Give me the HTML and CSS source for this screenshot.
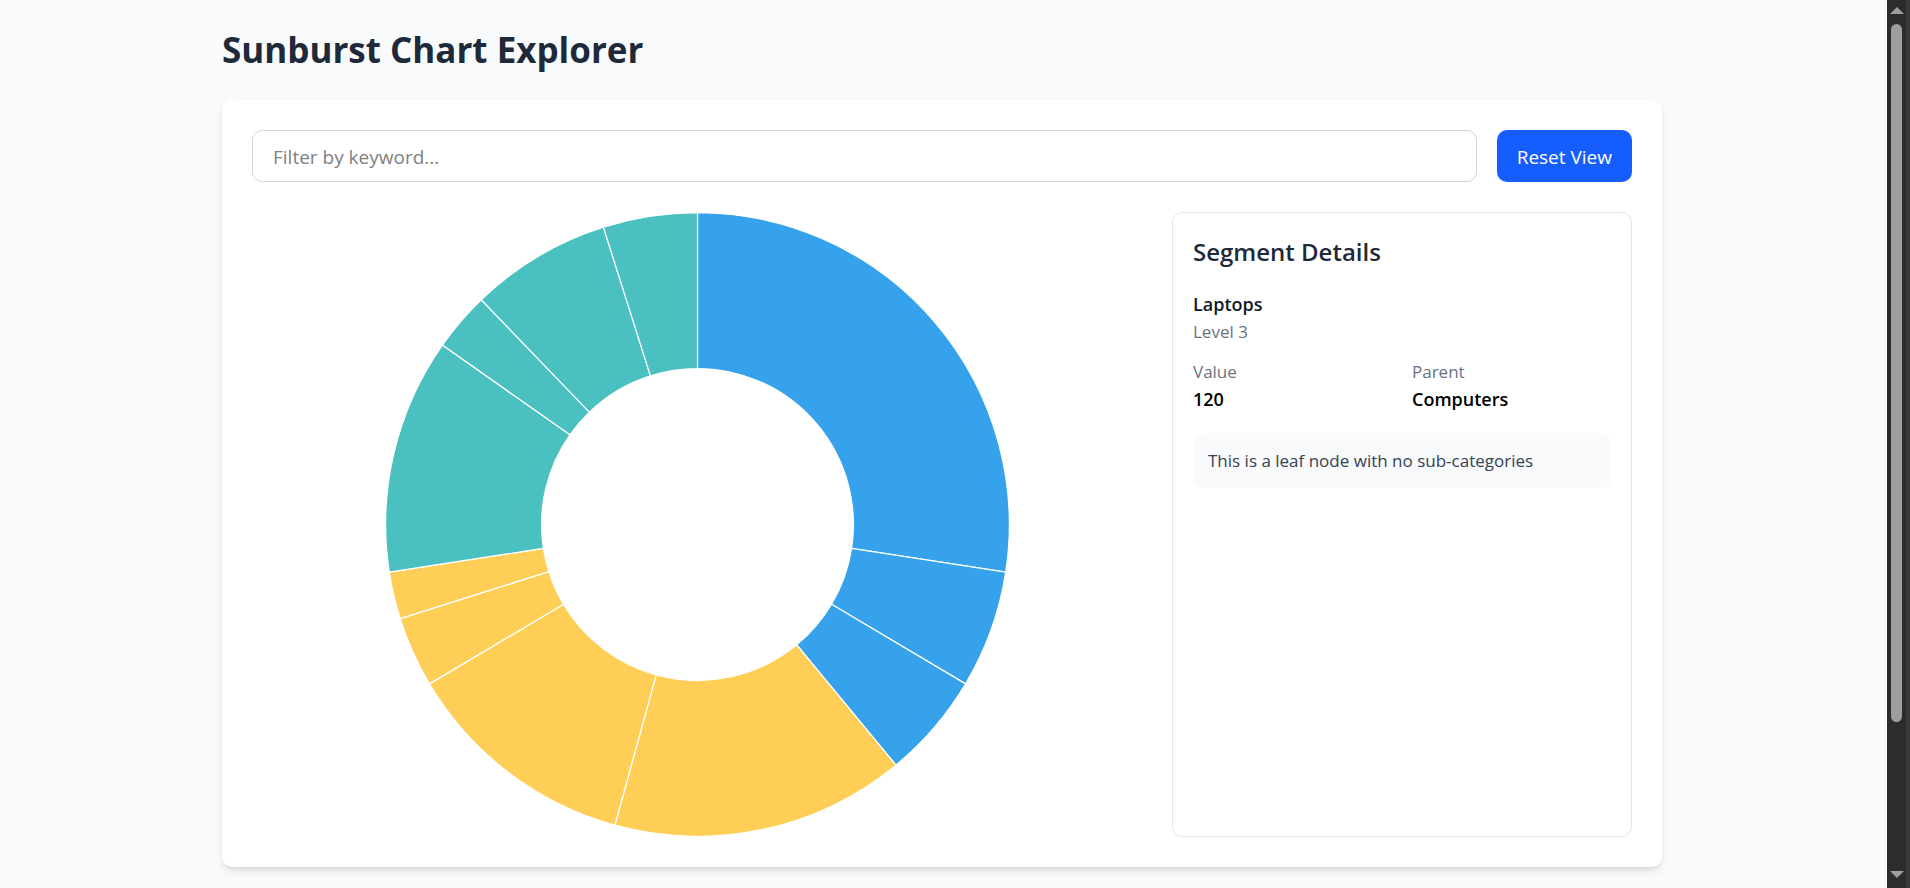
FILE: index.html
```
<!DOCTYPE html>
<html lang="en">
<head>
<meta charset="utf-8">
<title>Sunburst Chart Explorer</title>
<link rel="stylesheet" href="styles.css">
</head>
<body>
<div class="page">
  <main class="container">
    <h1 class="title">Sunburst Chart Explorer</h1>
    <section class="card">
      <form class="toolbar">
        <input class="filter" type="text" placeholder="Filter by keyword..." aria-label="Filter by keyword">
        <button class="reset" type="button">Reset View</button>
      </form>
      <div class="content">
        <div class="chart">
          <svg class="chart-svg" id="chart" viewBox="-250 -250 500 500" role="img" aria-label="Sunburst chart"></svg>
        </div>
        <aside class="details">
          <h2 class="details-title">Segment Details</h2>
          <h3 class="segment-name">Laptops</h3>
          <p class="muted">Level 3</p>
          <dl class="facts">
            <div><dt class="muted">Value</dt><dd class="fact">120</dd></div>
            <div><dt class="muted">Parent</dt><dd class="fact">Computers</dd></div>
          </dl>
          <p class="note">This is a leaf node with no sub-categories</p>
        </aside>
      </div>
    </section>
  </main>
</div>
<div class="rail" aria-hidden="true">
  <svg class="arrow" viewBox="0 0 14 8"><path d="M7 0 14 7H0Z"/></svg>
  <div class="track"><div class="thumb"></div></div>
  <svg class="arrow" viewBox="0 0 14 8"><path d="M0 0H14L7 7Z"/></svg>
</div>
<script src="chart.js"></script>
</body>
</html>
```
FILE: styles.css
```
* { box-sizing: border-box; margin: 0; padding: 0; }

body {
  display: grid;
  grid-template-columns: 1fr 23px;
  height: 100vh;
  overflow: hidden;
  background: #f9fafb;
  color: #000;
  font: 18px/30px "Segoe UI", "Open Sans", "Noto Sans", sans-serif;
}

.page { min-width: 0; overflow: hidden; padding: 27px 23px 0 20px; }
.container { max-width: 1440px; margin: 0 auto; }

.title {
  margin-bottom: 28px;
  color: #1e2939;
  font-size: 35px;
  font-weight: 700;
  line-height: 45px;
}

.card {
  padding: 30px;
  border-radius: 10px;
  background: #fff;
  box-shadow: 0 5px 8px -1px rgba(0, 0, 0, .1), 0 3px 5px -3px rgba(0, 0, 0, .1);
}

.toolbar { display: flex; gap: 20px; margin-bottom: 30px; }

.filter {
  flex: 1;
  min-width: 0;
  height: 52px;
  padding: 2px 20px 0;
  border: 1px solid #d1d5dc;
  border-radius: 10px;
  background: #fff;
  font: inherit;
  font-size: 19px;
}
.filter::placeholder { color: #808080; }

.reset {
  padding: 2px 20px 0;
  border: 0;
  border-radius: 10px;
  background: #155dfc;
  color: #fff;
  font: inherit;
  font-size: 19px;
  white-space: nowrap;
}

.content { display: flex; gap: 30px; }
.chart { flex: 1; min-width: 0; display: flex; justify-content: center; }
.chart-svg { display: block; width: 100%; max-width: 625px; aspect-ratio: 1; }
.segment { stroke: #fff; stroke-width: 1; stroke-linejoin: round; }
.electronics { fill: #36a2eb; }
.clothing { fill: #ffce56; }
.home { fill: #4bc0c0; }

.details {
  width: calc(100% / 3);
  padding: 21px 20px 20px;
  border: 1px solid #e5e7eb;
  border-radius: 10px;
}

.details-title {
  margin-bottom: 20px;
  color: #1e2939;
  font-size: 24px;
  font-weight: 600;
  line-height: 35px;
}
.segment-name { color: #101828; font-size: 18px; font-weight: 600; line-height: 30px; }
.muted { color: #6a7282; font-size: 17px; line-height: 25px; }

.facts {
  display: grid;
  grid-template-columns: 1fr 1fr;
  gap: 20px;
  margin: 15px 0 19px;
}
.fact { font-weight: 600; }

.note {
  padding: 15px;
  border-radius: 10px;
  background: #f9fafb;
  color: #364153;
  font-size: 17px;
  line-height: 25px;
}

.rail {
  display: flex;
  flex-direction: column;
  align-items: center;
  justify-content: space-between;
  padding: 7px 0 9px;
  border-right: 4px solid #383838;
  background: #2c2c2c;
}
.arrow { width: 14px; height: 8px; fill: #9e9e9e; }
.track { flex: 1; width: 11px; padding: 9px 0 6px; }
.thumb { height: 83%; border-radius: 6px; background: #9e9e9e; }
```
FILE: chart.js
```
const groups = [
  ["electronics", [225, 50, 45]],
  ["clothing", [125, 100, 30, 20]],
  ["home", [100, 25, 60, 40]]
];
const outer = 249.5;
const inner = 124.75;
const total = groups.reduce((sum, [, values]) => sum + values.reduce((a, b) => a + b, 0), 0);
const svg = document.getElementById("chart");

function point(radius, value) {
  const angle = value / total * 2 * Math.PI;
  return `${radius * Math.sin(angle)} ${-radius * Math.cos(angle)}`;
}

let start = 0;
for (const [name, values] of groups) {
  for (const value of values) {
    const end = start + value;
    const path = document.createElementNS("http://www.w3.org/2000/svg", "path");
    path.setAttribute("class", `segment ${name}`);
    path.setAttribute("d",
      `M${point(outer, start)}A${outer} ${outer} 0 0 1 ${point(outer, end)}` +
      `L${point(inner, end)}A${inner} ${inner} 0 0 0 ${point(inner, start)}Z`);
    svg.append(path);
    start = end;
  }
}
```
